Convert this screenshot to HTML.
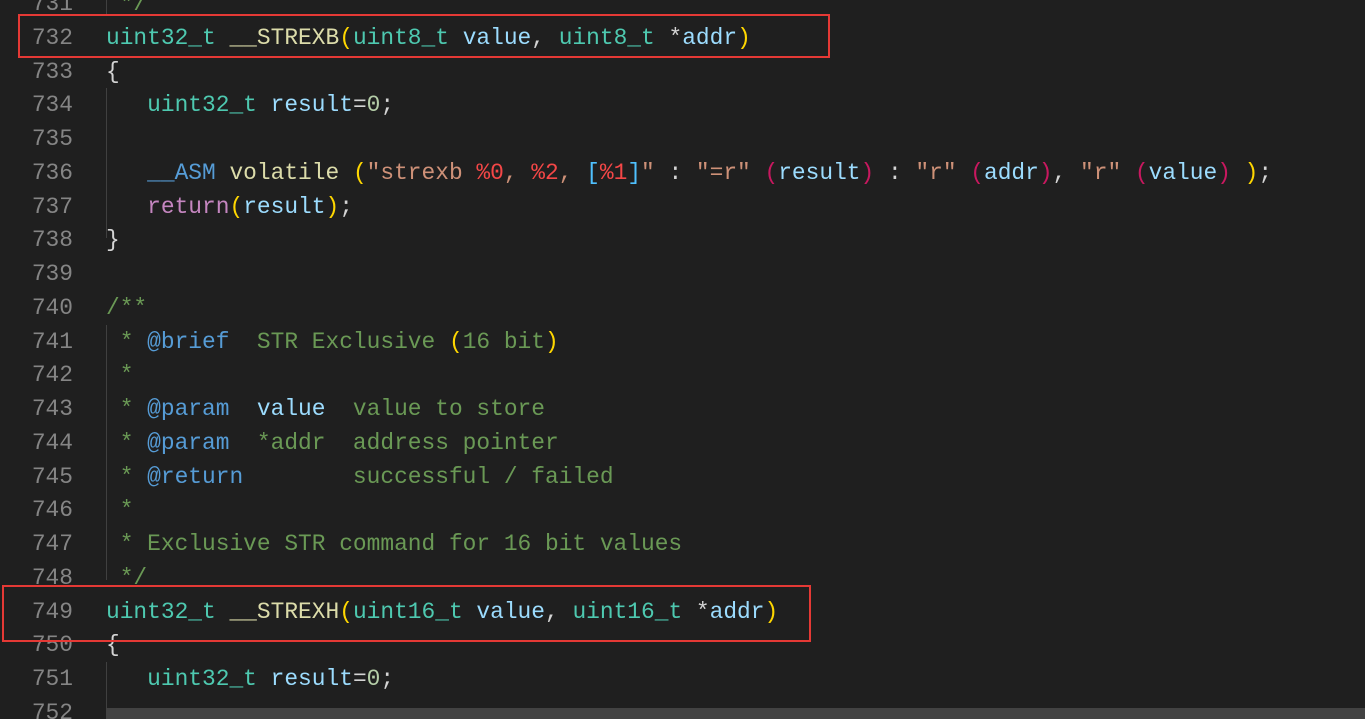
<!DOCTYPE html>
<html><head><meta charset="utf-8"><style>
html,body{margin:0;padding:0;background:#1f1f1f;width:1365px;height:719px;overflow:hidden;position:relative}
.wrap{position:absolute;top:-11.8px;left:0;font-family:"Liberation Mono",monospace;font-size:22.87px;line-height:33.75px;white-space:pre}
.ln{position:absolute;left:0;width:73px;text-align:right;color:#858585}
.cd{position:absolute;left:106px;color:#d4d4d4}
.t{color:#4ec9b0}.f{color:#dcdcaa}.p{color:#9cdcfe}.n{color:#b5cea8}.c{color:#6a9955}.s{color:#ce9178}
.y{color:#ffd700}.m{color:#c8185f}.k{color:#569cd6}.r{color:#c586c0}.e{color:#f44747}.b{color:#4fc1ff}
.guide{position:absolute;left:106px;width:1px;background:#404040}
.box{position:absolute;border:2px solid #e53935}
.sb{position:absolute;left:106px;right:0;top:708px;height:11px;background:#424242}
</style></head><body>
<div class="guide" style="top:0;height:15px"></div>
<div class="guide" style="top:88px;height:150px"></div>
<div class="guide" style="top:325px;height:255px"></div>
<div class="guide" style="top:662px;height:46px"></div>
<div class="wrap">
<div class="ln" style="top:0">731
732
733
734
735
736
737
738
739
740
741
742
743
744
745
746
747
748
749
750
751
752</div>
<div class="cd" style="top:0"><span class="c"> */</span>
<span class="t">uint32_t</span> <span class="f">__STREXB</span><span class="y">(</span><span class="t">uint8_t</span> <span class="p">value</span>, <span class="t">uint8_t</span> *<span class="p">addr</span><span class="y">)</span>
{
   <span class="t">uint32_t</span> <span class="p">result</span>=<span class="n">0</span>;

   <span class="k">__ASM</span> <span class="f">volatile</span> <span class="y">(</span><span class="s">"strexb </span><span class="e">%0</span><span class="s">, </span><span class="e">%2</span><span class="s">, </span><span class="b">[</span><span class="e">%1</span><span class="b">]</span><span class="s">"</span> : <span class="s">"=r"</span> <span class="m">(</span><span class="p">result</span><span class="m">)</span> : <span class="s">"r"</span> <span class="m">(</span><span class="p">addr</span><span class="m">)</span>, <span class="s">"r"</span> <span class="m">(</span><span class="p">value</span><span class="m">)</span> <span class="y">)</span>;
   <span class="r">return</span><span class="y">(</span><span class="p">result</span><span class="y">)</span>;
}

<span class="c">/**</span>
<span class="c"> * </span><span class="k">@brief</span><span class="c">  STR Exclusive </span><span class="y">(</span><span class="c">16 bit</span><span class="y">)</span>
<span class="c"> *</span>
<span class="c"> * </span><span class="k">@param</span><span class="c">  </span><span class="p">value</span><span class="c">  value to store</span>
<span class="c"> * </span><span class="k">@param</span><span class="c">  *addr  address pointer</span>
<span class="c"> * </span><span class="k">@return</span><span class="c">        successful / failed</span>
<span class="c"> *</span>
<span class="c"> * Exclusive STR command for 16 bit values</span>
<span class="c"> */</span>
<span class="t">uint32_t</span> <span class="f">__STREXH</span><span class="y">(</span><span class="t">uint16_t</span> <span class="p">value</span>, <span class="t">uint16_t</span> *<span class="p">addr</span><span class="y">)</span>
{
   <span class="t">uint32_t</span> <span class="p">result</span>=<span class="n">0</span>;
</div>
</div>
<div class="sb"></div>
<div class="box" style="left:18px;top:14px;width:808px;height:40px"></div>
<div class="box" style="left:2px;top:585px;width:805px;height:53px"></div>
</body></html>
